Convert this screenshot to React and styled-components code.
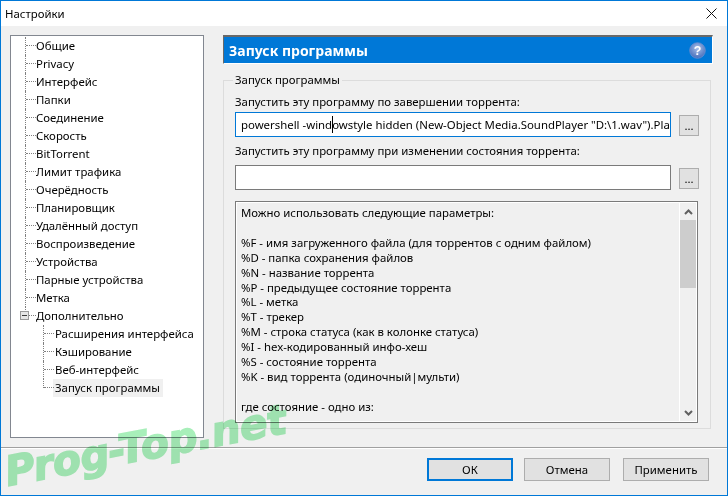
import React from 'react'
import styled, { createGlobalStyle } from 'styled-components'

const GlobalStyle = createGlobalStyle`
  html, body { margin: 0; padding: 0; overflow: hidden; }
  * { box-sizing: border-box; }
`
const Window = styled.div`
  position: relative;
  width: 728px;
  height: 496px;
  border: 1px solid #0078d7;
  background: #f0f0f0;
  display: flex;
  flex-direction: column;
  overflow: hidden;
  font-family: "Noto Sans", sans-serif;
  font-size: 11.4px;
  color: #000;
`
const TitleBar = styled.div`
  height: 25px;
  flex: none;
  background: #fff;
  display: flex;
  align-items: center;
  justify-content: space-between;
  padding: 0 10px 0 4px;
`
const Content = styled.div`
  height: 421px;
  flex: none;
  display: flex;
  padding: 9px 14px 0 9px;
  gap: 19px;
`
const Tree = styled.div`
  width: 194px;
  height: 403px;
  flex: none;
  background: #fff;
  border: 1px solid #828790;
  padding: 1px 0 0 14px;
`
const Row = styled.div`
  display: flex;
  height: 18px;
  align-items: center;
  white-space: nowrap;
`
const Elbow = styled.span`
  position: relative;
  width: ${p => (p.$indent ? 12 : 11)}px;
  height: ${p => (p.$last ? '9px' : '18px')};
  align-self: flex-start;
  flex: none;
  margin-left: ${p => p.$indent || 0}px;
  border-left: 1px dotted #808080;
  &::after {
    content: '';
    position: absolute;
    left: 0;
    top: 8px;
    width: 10px;
    border-top: 1px dotted #808080;
  }
`
const Expander = styled.span`
  position: absolute;
  z-index: 1;
  left: -6px;
  top: 4px;
  width: 9px;
  height: 9px;
  border: 1px solid #9a9a9a;
  background: #e6e6e6;
  &::after {
    content: '';
    position: absolute;
    left: 1px;
    top: 3px;
    width: 5px;
    height: 1px;
    background: #3a3a3a;
  }
`
const RowLabel = styled.span`
  padding: 0 ${p => (p.$selected ? 3 : 2)}px 0 2px;
  margin-left: -2px;
  line-height: 18px;
  background: ${p => (p.$selected ? '#f0f0f0' : 'transparent')};
`
const Panel = styled.div`
  width: 490px;
  display: flex;
  flex-direction: column;
`
const Header = styled.div`
  height: 29px;
  flex: none;
  background: #0078d7;
  border-top: 2px solid #696969;
  border-left: 1px solid #696969;
  border-right: 1px solid #fff;
  border-bottom: 1px solid #fff;
  color: #fff;
  font-weight: 700;
  font-size: 14px;
  display: flex;
  align-items: center;
  justify-content: space-between;
  padding: 0 6px 0 5px;
`
const Group = styled.fieldset`
  margin: 8px 2px 0 0;
  padding: 6px 11px 5px;
  height: 357px;
  border: 1px solid #dcdcdc;
  min-width: 0;
  display: flex;
  flex-direction: column;
`
const Legend = styled.legend`
  margin-left: -2px;
  padding: 0 2px;
  line-height: 16px;
`
const FieldLabel = styled.div`
  height: 16px;
  line-height: 16px;
  margin-bottom: ${p => p.$bottom || 2}px;
  margin-top: ${p => p.$top || 0}px;
  white-space: nowrap;
`
const FieldRow = styled.div`
  display: flex;
  align-items: center;
  gap: 8px;
`
const TextBox = styled.div`
  width: 436px;
  height: 25px;
  flex: none;
  background: #fff;
  border: 1px solid ${p => (p.$focused ? '#0078d7' : '#7a7a7a')};
  padding: 0 0 0 5px;
  line-height: 23px;
  white-space: nowrap;
  overflow: hidden;
`
const Caret = styled.span`
  display: inline-block;
  width: 1px;
  height: 17px;
  margin-right: -1px;
  vertical-align: -4px;
  background: #000;
`
const BrowseButton = styled.div`
  width: 23px;
  height: 21px;
  margin-top: 2px;
  background: #e1e1e1;
  border: 1px solid #adadad;
  text-align: center;
  line-height: 19px;
`
const InfoBox = styled.div`
  margin-top: 11px;
  width: 463px;
  height: 222px;
  flex: none;
  border: 1px solid #7a7a7a;
  display: flex;
  background: #f0f0f0;
  box-shadow: inset 0 0 0 1px #fff;
`
const InfoText = styled.div`
  flex: 1;
  padding: 4px 0 0 5px;
  line-height: 14.9px;
  white-space: pre;
  overflow: hidden;
`
const ScrollBar = styled.div`
  width: 17px;
  margin: 1px 1px 1px 0;
  flex: none;
  border-left: 1px solid #fff;
  display: flex;
  flex-direction: column;
  align-items: center;
`
const ScrollArrow = styled.div`
  height: 17px;
  flex: none;
  display: flex;
  align-items: center;
  justify-content: center;
`
const ScrollThumb = styled.div`
  width: 100%;
  height: 68px;
  background: #cdcdcd;
`
const ScrollTrack = styled.div`
  flex: 1;
`
const Footer = styled.div`
  flex: 1;
  border-top: 1px solid #a0a0a0;
  box-shadow: inset 0 1px 0 #fff;
  display: flex;
  justify-content: flex-end;
  align-items: flex-start;
  padding: 10px 18px 0 0;
  gap: 11px;
`
const DialogButton = styled.div`
  width: 86px;
  height: 23px;
  background: #e1e1e1;
  border: ${p => (p.$primary ? '2px solid #0078d7' : '1px solid #adadad')};
  margin-right: ${p => p.$gap || 0}px;
  display: flex;
  align-items: center;
  justify-content: center;
`
const Watermark = styled.div`
  position: absolute;
  left: 7px;
  top: 446px;
  font-family: "DejaVu Sans", sans-serif;
  font-weight: 700;
  font-style: italic;
  font-size: 41px;
  line-height: 50px;
  letter-spacing: -0.4px;
  color: #a8efba;
  -webkit-text-stroke: 1.5px #a8efba;
  mix-blend-mode: multiply;
  white-space: nowrap;
  transform: rotate(-10.8deg);
  transform-origin: 0 39px;
  pointer-events: none;
`

const topItems = ['Общие', 'Privacy', 'Интерфейс', 'Папки', 'Соединение', 'Скорость', 'BitTorrent', 'Лимит трафика', 'Очерёдность', 'Планировщик', 'Удалённый доступ', 'Воспроизведение', 'Устройства', 'Парные устройства', 'Метка']
const subItems = ['Расширения интерфейса', 'Кэширование', 'Веб-интерфейс', 'Запуск программы']

const infoLines = `Можно использовать следующие параметры:

%F - имя загруженного файла (для торрентов с одним файлом)
%D - папка сохранения файлов
%N - название торрента
%P - предыдущее состояние торрента
%L - метка
%T - трекер
%M - строка статуса (как в колонке статуса)
%I - hex-кодированный инфо-хеш
%S - состояние торрента
%K - вид торрента (одиночный|мульти)

где состояние - одно из:`

const HelpIcon = () => (
  <svg width="17" height="17" viewBox="0 0 17 17">
    <defs>
      <radialGradient id="help" cx="50%" cy="35%" r="70%">
        <stop offset="0" stopColor="#a9bfe8" />
        <stop offset="1" stopColor="#3f68b8" />
      </radialGradient>
    </defs>
    <circle cx="8.5" cy="8.5" r="7.8" fill="url(#help)" stroke="#6f8fcf" strokeWidth="0.8" />
    <text x="8.5" y="13" textAnchor="middle" fontSize="12.5" fontWeight="700" fontFamily="Liberation Sans" fill="#fff">?</text>
  </svg>
)

export default function App() {
  return (
    <Window>
      <GlobalStyle />
      <TitleBar>
        <span>Настройки</span>
        <svg width="11" height="11" viewBox="0 0 11 11">
          <path d="M0.5 0.5 L10.5 10.5 M10.5 0.5 L0.5 10.5" stroke="#111" strokeWidth="1" />
        </svg>
      </TitleBar>
      <Content>
        <Tree>
          {topItems.map(item => (
            <Row key={item}><Elbow /><RowLabel>{item}</RowLabel></Row>
          ))}
          <Row>
            <Elbow $last><Expander /></Elbow>
            <RowLabel>Дополнительно</RowLabel>
          </Row>
          {subItems.map((item, i) => (
            <Row key={item}>
              <Elbow $indent={18} $last={i === subItems.length - 1} />
              <RowLabel $selected={i === subItems.length - 1}>{item}</RowLabel>
            </Row>
          ))}
        </Tree>
        <Panel>
          <Header>
            <span>Запуск программы</span>
            <HelpIcon />
          </Header>
          <Group>
            <Legend>Запуск программы</Legend>
            <FieldLabel>Запустить эту программу по завершении торрента:</FieldLabel>
            <FieldRow>
              <TextBox $focused>powershell -wind<Caret />owstyle hidden (New-Object Media.SoundPlayer "D:\1.wav").Pla</TextBox>
              <BrowseButton>...</BrowseButton>
            </FieldRow>
            <FieldLabel $top={6} $bottom={6}>Запустить эту программу при изменении состояния торрента:</FieldLabel>
            <FieldRow>
              <TextBox />
              <BrowseButton>...</BrowseButton>
            </FieldRow>
            <InfoBox>
              <InfoText>{infoLines}</InfoText>
              <ScrollBar>
                <ScrollArrow>
                  <svg width="9" height="6" viewBox="0 0 9 6"><path d="M1 5 L4.5 1.5 L8 5" fill="none" stroke="#606060" strokeWidth="2" /></svg>
                </ScrollArrow>
                <ScrollThumb />
                <ScrollTrack />
                <ScrollArrow>
                  <svg width="9" height="6" viewBox="0 0 9 6"><path d="M1 1 L4.5 4.5 L8 1" fill="none" stroke="#606060" strokeWidth="2" /></svg>
                </ScrollArrow>
              </ScrollBar>
            </InfoBox>
          </Group>
        </Panel>
      </Content>
      <Footer>
        <DialogButton $primary>ОК</DialogButton>
        <DialogButton $gap={2}>Отмена</DialogButton>
        <DialogButton>Применить</DialogButton>
      </Footer>
      <Watermark>Prog-Top.net</Watermark>
    </Window>
  )
}
